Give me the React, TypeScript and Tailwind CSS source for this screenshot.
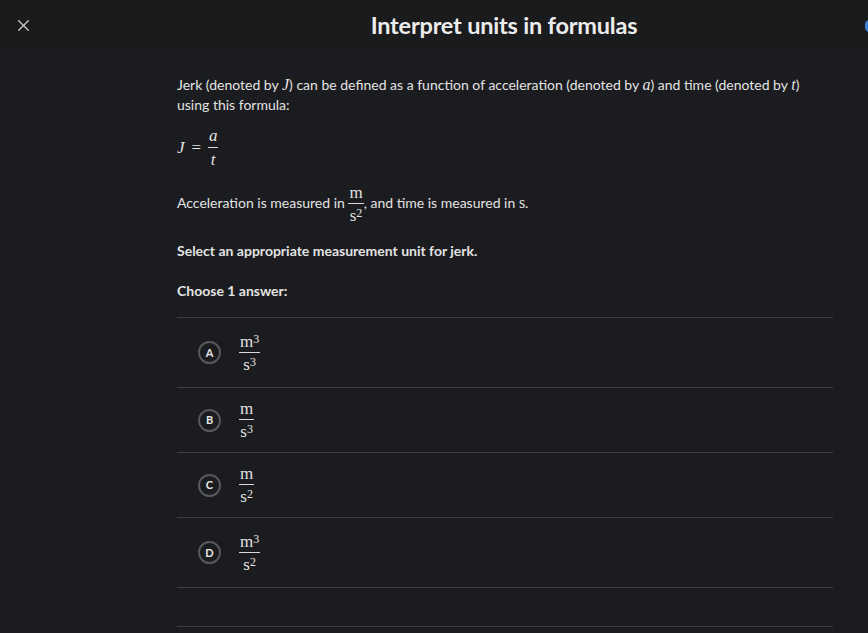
import { X } from "lucide-react";

const SERIF = "font-['Liberation_Serif','DejaVu_Serif',serif]";

function Frac({ num, den, sup, supDen }: { num: string; den: string; sup?: string; supDen?: string }) {
  return (
    <span className={`inline-flex flex-col items-center align-middle ${SERIF} text-[17px] leading-none`}>
      <span className="px-[1px] pb-[2px]">
        {num}
        {sup && <sup className="relative -top-[4px] text-[12px]">{sup}</sup>}
      </span>
      <span className="h-px w-full bg-[#d8d8d8]" />
      <span className="px-[1px] pt-[3px]">
        {den}
        {supDen && <sup className="relative -top-[4px] text-[12px]">{supDen}</sup>}
      </span>
    </span>
  );
}

const CHOICES = [
  { key: "A", num: "m", sup: "3", den: "s", supDen: "3", h: "h-[70px]" },
  { key: "B", num: "m", den: "s", supDen: "3", h: "h-[65px]" },
  { key: "C", num: "m", den: "s", supDen: "2", h: "h-[65px]" },
  { key: "D", num: "m", sup: "3", den: "s", supDen: "2", h: "h-[70px]" },
];

export default function App() {
  return (
    <div className="h-[633px] w-[868px] overflow-hidden bg-[#1b1c1f] font-['Lato','Noto_Sans',sans-serif] text-[#e3e3e3]">
      {/* header */}
      <header className="flex h-[51px] items-center bg-[#1a1b1d] pl-[14px]">
        <button type="button" className="text-[#cfcfcf]">
          <X className="size-[19px]" strokeWidth={1.6} />
        </button>
        <h1 className="flex-1 pl-[110px] text-center text-[23.5px] font-bold tracking-[-0.2px] text-[#ececec]">
          Interpret units in formulas
        </h1>
        <span className="mr-[-6px] h-[12px] w-[9px] rounded-full bg-[#3d7fd6]" />
      </header>

      <main className="px-[177px] pr-[35px] pt-[24px] text-[14px] leading-[20px]">
        <p>
          Jerk (denoted by <i className={SERIF + " text-[16px]"}>J</i>) can be defined as a function of acceleration
          (denoted by <i className={SERIF + " text-[16px]"}>a</i>) and time (denoted by{" "}
          <i className={SERIF + " text-[16px]"}>t</i>) using this formula:
        </p>

        <div className={`mt-[12px] flex items-center gap-[4px] ${SERIF} text-[17px]`}>
          <i>J</i>
          <span className="mx-[3px]">=</span>
          <span className="inline-flex flex-col items-center text-[17px] leading-none">
            <i className="pb-[3px]">a</i>
            <span className="h-px w-[10px] bg-[#d8d8d8]" />
            <i className="pt-[3px]">t</i>
          </span>
        </div>

        <p className="mt-[16px]">
          Acceleration is measured in <Frac num="m" den="s" supDen="2" />, and time is measured in{" "}
          <span className={SERIF + " text-[16px]"}>s</span>.
        </p>

        <p className="mt-[17px] font-bold">Select an appropriate measurement unit for jerk.</p>

        <p className="mt-[20px] font-bold">Choose 1 answer:</p>

        <ul className="mt-[16px] border-t border-[#3b3c3f]">
          {CHOICES.map((c) => (
            <li key={c.key} className={`flex items-center gap-[18px] border-b border-[#3b3c3f] pl-[21px] ${c.h}`}>
              <span className="flex size-[23px] items-center justify-center rounded-full border-2 border-[#56575a] text-[11px] font-bold text-[#e6e6e6]">
                {c.key}
              </span>
              <Frac num={c.num} sup={c.sup} den={c.den} supDen={c.supDen} />
            </li>
          ))}
          <li className="h-[39px] border-b border-[#3b3c3f]" />
        </ul>
      </main>
    </div>
  );
}
